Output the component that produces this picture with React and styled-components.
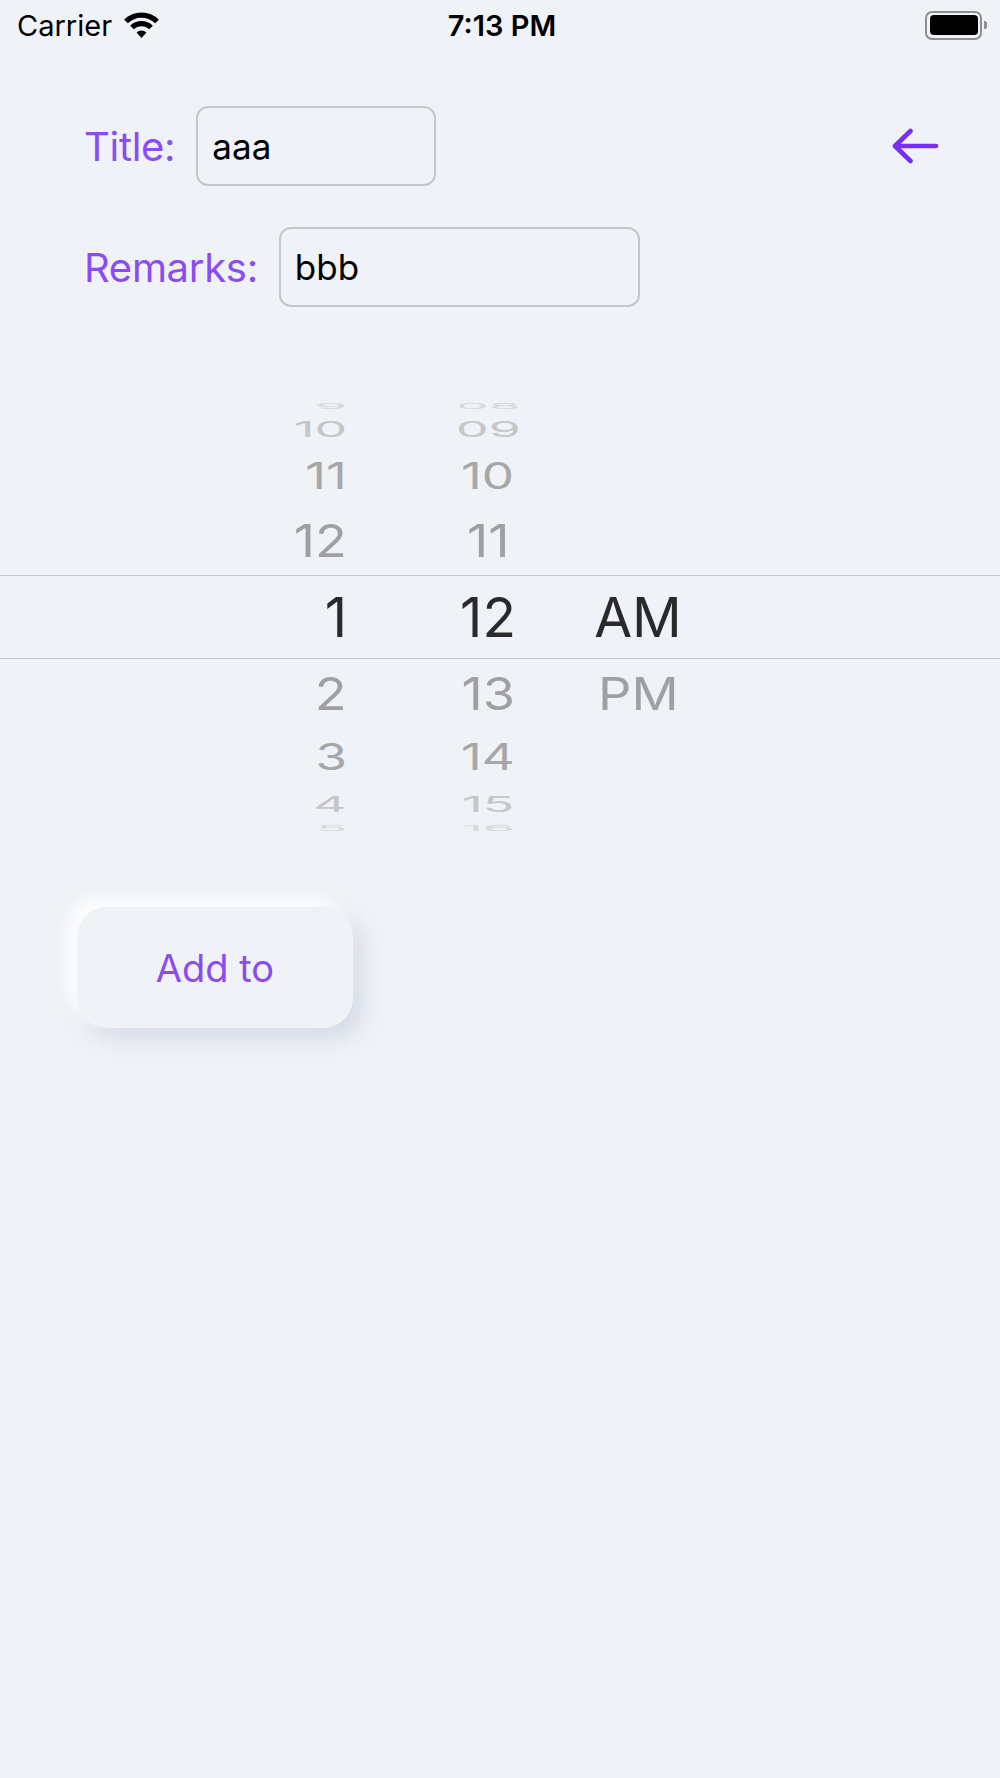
import React from 'react';
import styled, { createGlobalStyle } from 'styled-components';

const GlobalStyle = createGlobalStyle`
  html, body {
    margin: 0;
    padding: 0;
    background: #eff2f6;
  }
  body {
    font-family: Inter, "Noto Sans", "Liberation Sans", sans-serif;
  }
`;

const Screen = styled.div`
  width: 1000px;
  min-height: 1778px;
  background: #eff2f6;
  overflow: hidden;
`;

const StatusBar = styled.div`
  height: 50px;
  display: grid;
  grid-template-columns: 1fr auto 1fr;
  align-items: center;
  padding: 0 13px 0 17px;
  color: #000;
  font-size: 29px;
`;

const Carrier = styled.div`
  display: flex;
  align-items: center;
  gap: 11px;
`;

const Clock = styled.div`
  font-weight: 600;
`;

const Battery = styled.div`
  justify-self: end;
  display: flex;
  align-items: center;
  gap: 2px;
`;

const BatteryBody = styled.div`
  width: 48px;
  height: 20px;
  border: 2.5px solid #8e8e93;
  border-radius: 7px;
  padding: 2.5px;
  box-sizing: content-box;
  display: flex;
`;

const BatteryFill = styled.div`
  flex: 1;
  background: #000;
  border-radius: 4px;
`;

const BatteryNub = styled.div`
  width: 3px;
  height: 8px;
  background: #8e8e93;
  border-radius: 0 2px 2px 0;
`;

const Form = styled.div`
  padding: 56px 61px 0 84px;
  display: flex;
  flex-direction: column;
  gap: 41px;
`;

const FieldRow = styled.div`
  display: flex;
  align-items: center;
  gap: 21px;
`;

const Label = styled.label`
  color: #8c4cf5;
  font-size: 40px;
  letter-spacing: -0.3px;
`;

const TextBox = styled.input`
  width: ${(p) => p.$width}px;
  height: 80px;
  box-sizing: border-box;
  border: 2.5px solid #c3c6cb;
  border-radius: 12px;
  background: transparent;
  padding: 0 14px;
  font-family: Inter, "Noto Sans", sans-serif;
  font-size: 35px;
  color: #000;
  outline: none;
`;

const BackButton = styled.button`
  margin-left: auto;
  border: 0;
  background: none;
  padding: 0;
  display: flex;
  cursor: pointer;
`;

const Picker = styled.div`
  margin-top: 93px;
  display: flex;
  flex-direction: column;
`;

const WheelRow = styled.div`
  height: ${(p) => p.$h}px;
  display: flex;
  padding-left: 204px;
  ${(p) =>
    p.$selected &&
    `
    border-top: 1.5px solid #c4c7cc;
    border-bottom: 1.5px solid #c4c7cc;
    box-sizing: border-box;
  `}
`;

const Cell = styled.div`
  width: ${(p) => p.$w}px;
  margin-left: ${(p) => p.$ml || 0}px;
  display: flex;
  align-items: center;
  justify-content: ${(p) => p.$justify};
`;

const Value = styled.span`
  display: block;
  font-size: 55px;
  line-height: 1;
  color: ${(p) => p.$color};
  transform: scale(${(p) => p.$sx}, ${(p) => p.$sy});
  transform-origin: ${(p) => p.$origin};
  white-space: nowrap;
`;

const AddButton = styled.button`
  margin: 73px 0 0 77px;
  width: 276px;
  height: 121px;
  border: 0;
  border-radius: 30px;
  background: #eff2f6;
  box-shadow: -9px -9px 18px rgba(255, 255, 255, 0.95),
    9px 10px 20px rgba(186, 196, 218, 0.5);
  color: #8c4cf5;
  font-family: Inter, "Noto Sans", sans-serif;
  font-size: 38px;
  cursor: pointer;
`;

const WifiIcon = () => (
  <svg width="37" height="27" viewBox="0 0 37 27">
    <path d="M3 9.5 A22 22 0 0 1 34 9.5" fill="none" stroke="#000" strokeWidth="5.2" />
    <path d="M9 15.5 A13.5 13.5 0 0 1 28 15.5" fill="none" stroke="#000" strokeWidth="5.2" />
    <path d="M18.5 26 L13.6 20.6 A7 7 0 0 1 23.4 20.6 Z" fill="#000" />
  </svg>
);

const ArrowIcon = () => (
  <svg width="48" height="36" viewBox="0 0 48 36">
    <path
      d="M45 18 H4 M19.5 3 L4 18 L19.5 33"
      fill="none"
      stroke="#7a2ef5"
      strokeWidth="4.6"
      strokeLinecap="round"
      strokeLinejoin="round"
    />
  </svg>
);

// distance from the selected row, and how that row is projected on the wheel
const looks = {
  0: { sx: 1, sy: 1, color: '#2a2a2a', h: 84 },
  1: { sx: 0.95, sy: 0.83, color: '#a0a0a2', h: 69 },
  2: { sx: 0.93, sy: 0.66, color: '#a7a7a9', h: 59 },
  3: { sx: 0.94, sy: 0.4, color: '#c6c6c8', h: 35 },
  4: { sx: 0.94, sy: 0.14, color: '#d8d8da', h: 12 },
};

const rows = [
  { d: 4, hour: '9', minute: '08', half: '' },
  { d: 3, hour: '10', minute: '09', half: '' },
  { d: 2, hour: '11', minute: '10', half: '' },
  { d: 1, hour: '12', minute: '11', half: '' },
  { d: 0, hour: '1', minute: '12', half: 'AM' },
  { d: 1, hour: '2', minute: '13', half: 'PM' },
  { d: 2, hour: '3', minute: '14', half: '' },
  { d: 3, hour: '4', minute: '15', half: '' },
  { d: 4, hour: '5', minute: '16', half: '' },
];

const TimeWheel = () => (
  <Picker>
    {rows.map((r, i) => {
      const l = looks[r.d];
      const common = { $color: l.color, $sx: l.sx, $sy: l.sy };
      return (
        <WheelRow key={i} $h={l.h} $selected={r.d === 0}>
          <Cell $w={143} $justify="flex-end">
            <Value {...common} $origin="right center">{r.hour}</Value>
          </Cell>
          <Cell $w={160} $ml={61} $justify="center">
            <Value {...common} $origin="center">{r.minute}</Value>
          </Cell>
          <Cell $w={140} $justify="center">
            <Value {...common} $origin="center">{r.half}</Value>
          </Cell>
        </WheelRow>
      );
    })}
  </Picker>
);

const App = () => {
  return (
    <Screen>
      <GlobalStyle />
      <StatusBar>
        <Carrier>
          Carrier
          <WifiIcon />
        </Carrier>
        <Clock>7:13 PM</Clock>
        <Battery>
          <BatteryBody>
            <BatteryFill />
          </BatteryBody>
          <BatteryNub />
        </Battery>
      </StatusBar>

      <Form>
        <FieldRow>
          <Label>Title:</Label>
          <TextBox $width={240} defaultValue="aaa" />
          <BackButton aria-label="back">
            <ArrowIcon />
          </BackButton>
        </FieldRow>
        <FieldRow>
          <Label>Remarks:</Label>
          <TextBox $width={361} defaultValue="bbb" />
        </FieldRow>
      </Form>

      <TimeWheel />

      <AddButton>Add to</AddButton>
    </Screen>
  );
};

export default App;
